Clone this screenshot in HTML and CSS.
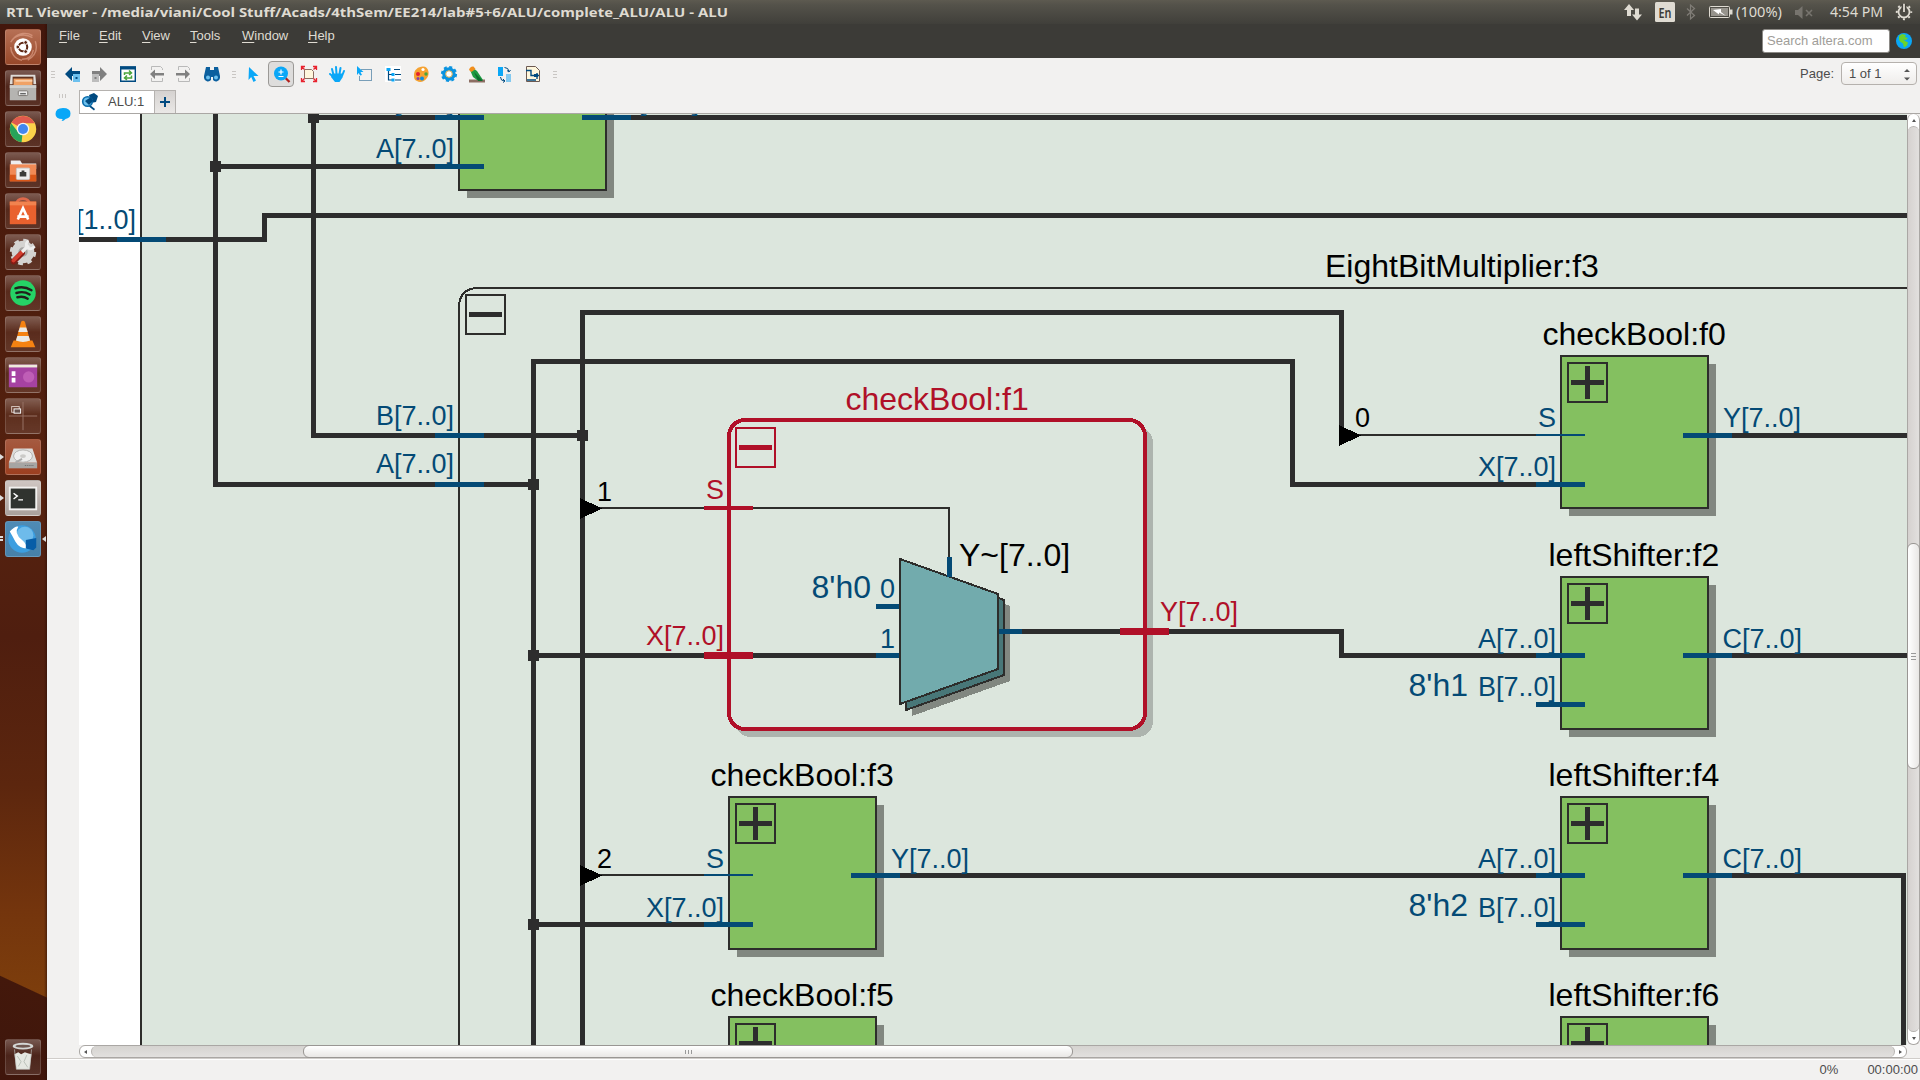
FILE: index.html
```html
<!DOCTYPE html>
<html lang="en">
<head>
<meta charset="utf-8">
<title>RTL Viewer</title>
<link rel="stylesheet" href="styles.css">
</head>
<body>
<div class="desktop">
  <header class="panel">
    <svg class="panel-title" width="730" height="24"><text x="6" y="17" textLength="722" lengthAdjust="spacingAndGlyphs">RTL Viewer - /media/viani/Cool Stuff/Acads/4thSem/EE214/lab#5+6/ALU/complete_ALU/ALU - ALU</text></svg>
    <svg class="indicators" width="300" height="24" viewBox="1620 0 300 24">
      <path fill="#dfdbd2" d="M1629 4l5 6h-3v6h-4v-6h-3zM1637 20.500l-5-6h3v-6h4v6h3z"/>
      <rect x="1655" y="2" width="20" height="20" rx="1.500" fill="#dfdbd2"/>
      <text class="lang" x="1658.500" y="17.500" textLength="13" lengthAdjust="spacingAndGlyphs">En</text>
      <path fill="none" stroke="#807d77" stroke-width="1.200" d="M1687 8.500l7.500 7-4 3.500V5l4 3.500-7.500 7"/>
      <rect x="1709.500" y="6.500" width="20" height="11" rx="1" fill="none" stroke="#dfdbd2"/>
      <rect x="1711" y="8" width="17" height="8" fill="#96938c"/>
      <path fill="#dfdbd2" d="M1730 9.500h2.500v5h-2.500z"/>
      <path fill="#fff" d="M1713 10l8-1v3l5 4-7-3.500v2z"/>
      <text x="1736" y="17" textLength="46" lengthAdjust="spacingAndGlyphs">(100%)</text>
      <path fill="#77746e" d="M1795 10h3l4.500-4v13l-4.500-4h-3z"/>
      <path stroke="#77746e" stroke-width="1.600" d="M1806 10l6 6m0-6l-6 6"/>
      <text x="1830" y="17" textLength="53" lengthAdjust="spacingAndGlyphs">4:54 PM</text>
      <circle cx="1904" cy="12" r="5.500" fill="none" stroke="#dfdbd2" stroke-width="1.800"/>
      <circle cx="1904" cy="12" r="7.200" fill="none" stroke="#dfdbd2" stroke-width="2" stroke-dasharray="2 3.655" stroke-dashoffset="1"/>
      <path stroke="#46443e" stroke-width="5" d="M1904 4v7"/><path stroke="#dfdbd2" stroke-width="1.800" d="M1904 4v8"/>
    </svg>
  </header>

  <div class="workspace">
    <nav class="launcher">
      <div class="tile tile-dash"><svg viewBox="0 0 36 36"><path d="M5 13C9 5 20 3 28 8M31 12c3 9-1 16-8 20M5 18c0 6 4 13 12 14M8 9c5-6 14-7 20-3M29 21c-1 7-6 10-12 10" fill="none" stroke="#e5a991" stroke-width="1.500" opacity=".6"/><circle cx="18" cy="18" r="9.300" fill="#fff"/><circle cx="18" cy="18" r="4.500" fill="none" stroke="#5d2714" stroke-width="2.200"/><g fill="#5d2714" stroke="#fff"><circle cx="12.500" cy="18" r="2"/><circle cx="20.800" cy="13.200" r="2"/><circle cx="20.800" cy="22.800" r="2"/></g></svg></div>
      <div class="tile"><svg viewBox="0 0 36 36"><path fill="#dedcd8" d="M5 4h26l1 10H4z"/><path fill="#62331f" d="M7 6h22v9H7z"/><path fill="#f0a266" d="M8 8h20v7H8z"/><path fill="#fff1df" d="M10 10h18v1H10z"/><path fill="#b5b4b1" d="M4 15h28v16H4z"/><path fill="#d0cfcc" d="M4 15h28v3H4z"/><rect x="13" y="21" width="10" height="5" rx="1" fill="#eee" stroke="#77736d"/><path d="M15 24h6" stroke="#666" stroke-width="1.500"/></svg></div>
      <div class="tile"><svg viewBox="0 0 36 36"><circle cx="18" cy="18" r="14" fill="#fcd24a"/><path fill="#df5a4e" d="M18 18L5.900 11A14 14 0 0 1 30.500 12H18z"/><path fill="#27a35a" d="M18 18l-1.500 14A14 14 0 0 1 5.500 12l7 9z"/><circle cx="18" cy="18" r="6.700" fill="#f4f4f4"/><circle cx="18" cy="18" r="5.300" fill="#4387f0"/></svg></div>
      <div class="tile"><svg viewBox="0 0 36 36"><path fill="#eee" d="M5 8h10l2 3h15v6H5z"/><path fill="#f18a55" d="M4 12h28v18H4z"/><path fill="#d95719" d="M4 23h28v7H4z"/><rect x="11" y="16" width="14" height="12" rx="1" fill="#f0efed" stroke="#c9c6c3"/><path fill="#3c3c38" d="M14.500 20h2v-1.500h3V20h2v5h-7z"/></svg></div>
      <div class="tile"><svg viewBox="0 0 36 36"><path d="M11 11c0-8 14-8 14 0" fill="none" stroke="#de694b" stroke-width="3"/><path fill="#e9612e" d="M4 8h28v24H4z"/><path fill="#f1834f" d="M4 8h28v4H4z"/><path fill="none" stroke="#fff" stroke-width="2.800" d="M12.500 27L18 15l5.500 12M12 24h12"/></svg></div>
      <div class="tile"><svg viewBox="0 0 36 36"><circle cx="18" cy="18" r="12" fill="#d4d3d1"/><circle cx="18" cy="18" r="12.500" fill="none" stroke="#d4d3d1" stroke-width="3" stroke-dasharray="5 4.800"/><circle cx="18" cy="18" r="5" fill="#a5a4a2"/><path stroke="#861b14" stroke-width="6" stroke-linecap="round" d="M8 28l9-9"/><path stroke="#d33c2d" stroke-width="4" stroke-linecap="round" d="M8 27l9-9"/><path stroke="#eee" stroke-width="3.500" d="M17 18l7-7"/><path d="M24 6a4.500 4.500 0 1 0 6 6" fill="none" stroke="#eee" stroke-width="3"/></svg></div>
      <div class="tile"><svg viewBox="0 0 36 36"><circle cx="18" cy="18" r="13.500" fill="#25d366"/><path d="M10 13c6-2 12-1 17 2M11 18c5-1.500 10-1 14 1.500M12 22.500c4-1 8-.500 11 1.500" fill="none" stroke="#231f1c" stroke-width="2.500" stroke-linecap="round"/></svg></div>
      <div class="tile"><svg viewBox="0 0 36 36"><path fill="#f58212" d="M8 25h20l3 7H5z"/><path fill="#f58212" d="M16 5q2-2 4 0l6 22q-8 4-16 0z"/><path fill="#e9e9e6" d="M14.600 11h6.800l1.600 5h-10zM12 20h12l1.500 5q-7.500 3-15 0z"/></svg></div>
      <div class="tile"><svg viewBox="0 0 36 36"><rect x="3" y="7" width="30" height="24" fill="#a642a2"/><circle cx="24" cy="20" r="6" fill="#d779ca" opacity=".5"/><path fill="#eeebdc" d="M3 7h30v3H3z"/><path fill="#fff" d="M6 14h4v5H6zM6 21h4v5H6z"/></svg></div>
      <div class="tile"><svg viewBox="0 0 36 36"><path d="M18 3v30M3 18h30" stroke="#997669"/><rect x="6" y="8" width="8" height="6" fill="none" stroke="#dac9c2"/><rect x="8.500" y="10.500" width="7" height="4.500" fill="#67504b" stroke="#fff"/></svg></div>
      <div class="tile tile-disk"><svg viewBox="0 0 36 36"><path fill="#dddcda" d="M8 9h20l5 15H3z"/><path fill="#a6a5a3" d="M3 24h30v6H3z"/><ellipse cx="18" cy="17" rx="10" ry="6.500" fill="#eee" stroke="#b0afad"/><ellipse cx="18" cy="17" rx="3" ry="2" fill="#cbcac8"/><path d="M10 24l7-4" stroke="#aaa" stroke-width="2"/><path d="M20 27h10" stroke="#666" stroke-dasharray="1 1"/></svg><i class="pip"></i></div>
      <div class="tile tile-term"><svg viewBox="0 0 36 36"><path fill="#f2f1ef" d="M3 6h30v25H3z"/><path fill="#30332f" d="M5 8h26v21H5z"/><path fill="none" stroke="#fff" stroke-width="1.500" d="M8 13l4 3-4 3M13 20h5"/></svg><i class="pip"></i></div>
      <div class="tile tile-quartus"><svg viewBox="0 0 36 36"><circle cx="17" cy="18" r="14.500" fill="#3c9ee0"/><circle cx="20" cy="14" r="9" fill="#83c7f0" opacity=".7"/><path fill="#fff" d="M4 10q6-6 9-5-5 7 4 14 5 4 5 9-8 0-12-7-3-6-6-11z"/><path fill="#075da7" d="M21 19l11-2v10l-3 3-8-2z"/></svg><i class="pip pip-double"></i><i class="pip-right"></i></div>
      <div class="tile tile-trash"><svg viewBox="0 0 36 36"><ellipse cx="18" cy="6.500" rx="11" ry="3.500" fill="#d3d6d4"/><ellipse cx="18" cy="6.500" rx="8" ry="1.600" fill="#6f5851"/><path fill="#e5e8e2" d="M9 15l4-2 3 2 4-2 3 1 4 1-2 16H11z"/><path d="M9 10l2 21h14l2-21" fill="none" stroke="#bfc2bf" opacity=".7"/><path d="M12 17l4 6-3 5M22 16l-3 7 4 6" fill="none" stroke="#b9c0b8"/></svg></div>
    </nav>

    <main class="window">
      <div class="menubar">
        <nav class="menus"><span class="m-file"><u>F</u>ile</span><span class="m-edit"><u>E</u>dit</span><span class="m-view"><u>V</u>iew</span><span class="m-tools"><u>T</u>ools</span><span class="m-window"><u>W</u>indow</span><span><u>H</u>elp</span></nav>
        <div class="search">Search altera.com</div>
        <svg class="globe" width="16" height="16"><circle cx="8" cy="8" r="8" fill="#0aa7f7"/><path fill="#6bd32b" d="M3 3l3-2 4 1-1 2 3 1-2 2-3-.500 3 2 2 1-1 3-3 2-1-4-3-2-1-2z"/></svg>
      </div>

      <div class="toolbar">
        <svg class="tools" width="520" height="32" viewBox="47 58 520 32">
          <g stroke="#c9c6c3" stroke-width="1"><path d="M51 71.500h4M51 74.500h4M51 77.500h4M232 71.500h4M232 74.500h4M232 77.500h4M553 71.500h4M553 74.500h4M553 77.500h4"/></g>
          <path fill="#004a80" d="M65 74l7-7v4h8v5h-8v5z"/><path fill="#6cc0ee" d="M73 74h7v8h-7z"/><path fill="#004a80" d="M75.500 77h2v2h-2z"/>
          <path fill="#808080" d="M107 74l-7-7v4h-8v5h8v5z"/><path fill="#bdbdbd" d="M92 74h7v8h-7z"/><path fill="#808080" d="M94.500 77h2v2h-2z"/>
          <path fill="#fff" stroke="#004a80" stroke-width="1.400" d="M120.700 67h14.600v14.300h-14.600z"/><path fill="#004a80" d="M120 66.500h16v3h-16z"/>
          <path fill="none" stroke="#4aa53c" stroke-width="1.500" d="M124.500 75v-2h6m-1.500-2.500l2.500 2.500-2.500 2M131.500 75.500v2.500h-6m1.500-2.500l-2.500 2.500 2.500 2"/>
          <g fill="none" stroke="#b9b9b9"><path d="M151.500 70v-3.500h9l2 2V70M151.500 78v3.500h11V78M178.500 70v-3.500h9l2 2V70M178.500 78v3.500h11V78"/></g>
          <path fill="#808080" d="M150 74l5-4.500V73h9v2.500h-9V79zM190 74l-5-4.500V73h-9v2.500h9V79z"/>
          <path fill="#0b5f9e" d="M206 67h4v3h4v-3h4l2 9v2a4 4 0 0 1-7 2v-3h-2v3a4 4 0 0 1-7-2v-2z"/><circle cx="208" cy="77.500" r="2" fill="#6cc0ee"/><circle cx="216" cy="77.500" r="2" fill="#6cc0ee"/>
          <path fill="#0aa7f7" d="M249 67l9.500 9h-5l2.500 4.500-2.500 1.500-2.300-5-2.700 3z"/>
          <rect class="pressed" x="268.500" y="61.500" width="25" height="25" rx="3.500"/>
          <path stroke="#b3201c" stroke-width="2.300" d="M284.500 77l5 5"/><circle cx="281" cy="73.500" r="7" fill="#0aa7f7"/><path stroke="#fff" stroke-width="1.200" d="M278.500 72h5M281 69.500v5M278.500 76.500h5"/>
          <path fill="#fff7dd" stroke="#8d6e63" d="M304.500 69.500h7l2 2v7h-9z"/><path fill="none" stroke="#e8222e" stroke-width="1.300" d="M301.500 70v-3.500h3.500M301.500 66.500l3 3M313 66.500h3.500v3.500M316.500 66.500l-3 3M301.500 78v3.500h3.500M301.500 81.500l3-3M313 81.500h3.500v-3.500M316.500 81.500l-3-3"/>
          <g fill="none" stroke="#0aa7f7" stroke-width="2" stroke-linecap="round"><path d="M333.500 75l-1.500-6M336.500 74l-.500-7M339.500 74l1-6M342 76l2-5M333.500 77l-3.500-3"/></g><path fill="#0aa7f7" d="M332.500 73.500h9.500l.5 4-3 4.500h-4.500l-4-5z"/>
          <path fill="none" stroke="#004a80" stroke-dasharray="1 1" d="M361.500 69.500h10v11h-12v-5"/><path fill="#0aa7f7" d="M357 66l6.500 6h-3l1.500 3-2 .500-1.200-2.500-1.800 2z"/>
          <path fill="#fff" d="M385 66h16v16h-16z"/><path fill="none" stroke="#004a80" stroke-width="1.200" d="M388.500 70v10h4M388.500 74.500h4M394 69.500h6M395 74.500h6M395 80h6"/><path fill="#0aa7f7" d="M386.500 68h4v3h-4zM391.500 73h3v3h-3zM391.500 78.500h3v3h-3z"/>
          <path fill="#f5a232" d="M414 75c0-5 4-8.500 9-8.500 6 0 7 8 4 11.500-3 4-7 5-10 3-3-1-3-4-3-6z"/><circle cx="423" cy="69.500" r="1.600" fill="#fff"/><circle cx="418" cy="74" r="2" fill="#e41f2c"/><circle cx="422" cy="78.500" r="2" fill="#0b8fe0"/><circle cx="426" cy="74" r="1.700" fill="#4aa53c"/><circle cx="418" cy="78.500" r="1.500" fill="#8442a8"/>
          <circle cx="449" cy="74" r="5" fill="none" stroke="#0a93e0" stroke-width="3.500"/><circle cx="449" cy="74" r="7" fill="none" stroke="#0a93e0" stroke-width="2.200" stroke-dasharray="3 2.500"/><circle cx="449" cy="74" r="3.300" fill="#fff" stroke="#d4a84e"/>
          <path fill="#8d6e63" d="M469 79.500h16v3h-16z"/><path fill="#1d9a42" d="M470 70l3-2 4 3 6 9h-6l-4-3z"/><path fill="#0b6e2f" d="M474 72l9 9h-5z"/><path fill="#f28e1c" d="M469 70q1-4 4.500-3.500l2 2.500-4 3z"/>
          <path fill="#0aa7f7" d="M498 67h5v9h-5z"/><path fill="#82c9f0" d="M506 74h5v8h-5z"/><path fill="none" stroke="#004a80" d="M504.500 67.500q4 0 4.500 4m-2-1l2 1.500 1.500-2M500.500 77q0 4 4 4m-1.500-2l2 2-2 1.500"/>
          <path fill="#fff7dd" stroke="#6d5a52" d="M526.500 66.500h9l4 4v11h-13z"/><path fill="none" stroke="#004a80" stroke-width="1.400" d="M526 70.500h5v5h8M537 73v6M527 80h9"/><path fill="#004a80" d="M534 74h4v3h-4z"/>
        </svg>
        <div class="pager"><span>Page:</span><div class="combo"><span>1 of 1</span><svg width="8" height="14"><path fill="#555" d="M1 4l3-3 3 3zM1 9.500h6l-3 3z"/></svg></div></div>
      </div>

      <div class="content">
        <aside class="dock"><svg width="32" height="40" viewBox="47 90 32 40"><path stroke="#c9c6c3" d="M59.500 94v4M62.500 94v4M65.500 94v4"/><path fill="#0aa7f7" d="M55.500 114q0-6 7.500-6 7.500 0 7.500 5.500 0 4.500-5 5.500-2 2.500-4 2 1.200-1 1-2-7 0-7-5z"/></svg></aside>
        <section class="viewer">
          <div class="tabs">
            <div class="tab"><svg width="18" height="18"><path fill="#004a80" d="M8 2l5-2 4 3-2 6-5 1zM9 12l5 4-1 1.500-5-4z"/><circle cx="6.500" cy="8.500" r="4.800" fill="#6cc0ee" stroke="#0b6cab" stroke-width="1.600"/><path fill="#004a80" d="M4 8l6-4 2 4-4 4z"/></svg><span>ALU:1</span></div>
            <div class="tab-add"><svg width="10" height="10"><path stroke="#004a80" stroke-width="2" d="M0 5h10M5 0v10"/></svg></div>
          </div>
          <div class="canvas-row">
            <svg class="schematic" width="1828" height="931" viewBox="79 114 1828 931">
              <defs>
                <g id="module">
                  <path class="shadow" d="M9 9h147v152H9z"/>
                  <path class="body" d="M1 1h147v152H1z"/>
                  <path class="frame" d="M8 8h39v39H8z"/>
                  <path class="ink" d="M11 25h33v5H11zM25 11h5v33h-5z"/>
                </g>
                <path id="node" class="ink" d="M0 0h11v11H0z"/>
                <path id="tap" d="M0 0l22 10.500L0 21z"/>
              </defs>
              <rect x="79" y="114" width="62" height="931" fill="#fff"/>
              <rect x="141" y="114" width="1766" height="931" fill="#dce6dd"/>
              <path class="frame" d="M141 110v940"/>
              <path class="frame" d="M459 1050V306q1-17 18-18h1440"/>
              <path class="frame" d="M466 295h39v39h-39z"/><path class="ink" d="M469 312h33v5h-33z"/>

              <rect x="735" y="427" width="418" height="310" rx="16" fill="#adb4ae"/>
              <rect x="729" y="420" width="416" height="309" rx="16" fill="#dce6dd" stroke="#b01028" stroke-width="4"/>
              <path fill="none" stroke="#b01028" stroke-width="2" d="M736 428h39v39h-39z"/><path fill="#b01028" d="M739 445h33v5h-33z"/>

              <use href="#module" x="458" y="37"/>
              <use href="#module" x="1560" y="355"/>
              <use href="#module" x="1560" y="576"/>
              <use href="#module" x="728" y="796"/>
              <use href="#module" x="1560" y="796"/>
              <use href="#module" x="728" y="1016"/>
              <use href="#module" x="1560" y="1016"/>

              <g class="wire">
                <path d="M215.500 110v374.500H534"/>
                <path d="M313.500 117v318.500H583"/>
                <path d="M313 117.500h145M216 166.500h242M607 117.500h1310"/>
                <path d="M70 239.500h194.500v-24H1920"/>
                <path d="M533.500 1050V361.500h759v123H1560"/>
                <path d="M582.500 1050V312.500h759V434"/>
                <path d="M534 655.500h350M534 924.500h194"/>
                <path d="M1010 631.500h331.500v24H1560"/>
                <path d="M1709 435.500h220M1709 655.500h220M877 875.500h683M1709 875.500h194.500V1050"/>
              </g>
              <g class="thin"><path d="M600 508h349v60M1358 435h178M600 875h110"/></g>
              <g class="ink"><use href="#node" x="210" y="161"/><use href="#node" x="308" y="112"/><use href="#node" x="577" y="430"/><use href="#node" x="528" y="479"/><use href="#node" x="528" y="650"/><use href="#node" x="528" y="919"/></g>
              <use href="#tap" x="580" y="498"/><use href="#tap" x="580" y="865"/><use href="#tap" x="1339" y="425"/>

              <g class="pin">
                <path d="M435 117.500h49M435 166.500h49M582 117.500h49M117 239.500h49M435 435.500h49M435 484.500h49"/>
                <path d="M1536 484.500h49M1683 435.500h49M1536 655.500h49M1536 704.500h49M1683 655.500h49M1536 875.500h49M1536 924.500h49M1683 875.500h49M704 924.500h49M851 875.500h49"/>
                <path d="M876 606.500h24M876 655.500h24"/>
              </g>
              <path class="pin-thin" d="M704 875h49M1536 435h49"/>

              <path class="shadow" d="M912 571l98 35v75l-98 35z"/>
              <path class="mux-back" d="M906 565l98 35v75l-98 35z"/>
              <path class="mux" d="M900 559l98 35v75l-98 35z"/>
              <path class="pin" d="M949.500 557v20M999 631.500h23"/>
              <path fill="#b01028" d="M704 506h49v4h-49zM704 652h49v7h-49zM1120 628h49v7h-49z"/>

              <g class="port end">
                <text x="454" y="110">B[7..0]</text><text x="454" y="158">A[7..0]</text><text x="136" y="229">[1..0]</text>
                <text x="454" y="425">B[7..0]</text><text x="454" y="473">A[7..0]</text>
                <text x="724" y="868">S</text><text x="724" y="917">X[7..0]</text>
                <text x="1556" y="427">S</text><text x="1556" y="476">X[7..0]</text>
                <text x="1556" y="648">A[7..0]</text><text x="1556" y="696">B[7..0]</text>
                <text x="1556" y="868">A[7..0]</text><text x="1556" y="917">B[7..0]</text>
                <text x="895" y="598">0</text><text x="895" y="648">1</text>
              </g>
              <g class="port">
                <text x="621" y="110">S[7..0]</text><text x="1723" y="427">Y[7..0]</text><text x="1722.500" y="648">C[7..0]</text><text x="1722.500" y="868">C[7..0]</text><text x="891" y="868">Y[7..0]</text>
              </g>
              <g class="port red"><text class="end" x="724" y="499">S</text><text class="end" x="724" y="645">X[7..0]</text><text x="1160" y="621">Y[7..0]</text></g>
              <g class="port black"><text x="597" y="501">1</text><text x="597" y="868">2</text><text x="1355" y="427">0</text></g>
              <g class="title blue"><text x="811.500" y="598">8'h0</text><text x="1408.500" y="696">8'h1</text><text x="1408.500" y="916">8'h2</text></g>
              <g class="title">
                <text x="1325" y="277">EightBitMultiplier:f3</text><text x="1542.500" y="345">checkBool:f0</text><text x="1548.500" y="566">leftShifter:f2</text><text x="1548.500" y="786">leftShifter:f4</text><text x="1548.500" y="1006">leftShifter:f6</text>
                <text x="710.500" y="786">checkBool:f3</text><text x="710.500" y="1006">checkBool:f5</text><text x="959" y="566">Y~[7..0]</text><text class="red" x="845.500" y="410">checkBool:f1</text>
              </g>
            </svg>
            <div class="vscroll"><b class="up"></b><div class="vtrack"><div class="vthumb"><i></i><i></i><i></i></div></div><b class="down"></b></div>
          </div>
          <div class="hscroll"><b class="left"></b><div class="htrack"><div class="hthumb"><i></i><i></i><i></i></div></div><b class="right"></b></div>
        </section>
      </div>
      <footer class="status"><span>0%</span><span>00:00:00</span></footer>
    </main>
  </div>
</div>
</body>
</html>
```
FILE: styles.css
```css
* { box-sizing: border-box; }
body { margin: 0; overflow: hidden; font: 13px "Liberation Sans", Arial, sans-serif; color: #4c4c4c; }
.desktop { width: 1920px; height: 1080px; display: flex; flex-direction: column; }
svg { display: block; flex: none; }

.panel { height: 24px; display: flex; justify-content: space-between; background: linear-gradient(#5d5a50, #54524a 20%, #403f3a); }
.panel text { font: 14px "Noto Sans", sans-serif; fill: #dfdbd2; }
.panel .panel-title text { font: bold 13px "Open Sans", "Noto Sans", sans-serif; }
.panel .lang { font-weight: 600; fill: #3c3b37; }

.workspace { flex: 1; display: flex; min-height: 0; }
.launcher {
  width: 47px; display: flex; flex-direction: column; gap: 5px; padding: 5px 0 5px 5px;
  background:
    linear-gradient(90deg, transparent 44px, #2a0d0688 47px),
    linear-gradient(205deg, transparent 20px, #43180b 21px, #3f160c) 0 100% / 47px 105px no-repeat,
    linear-gradient(#43170c, #56220f 45%, #4f1e0f 58%, #5c260e 72%, #74350d 84%, #7d3e0c 92%);
}
.tile { position: relative; width: 36px; height: 36px; border-radius: 3px; border: 1px solid #ffffff24; background: linear-gradient(#ffffff48, #ffffff10 45%, #ffffff1c); }
.tile svg { width: 34px; height: 34px; }
.tile-dash { background: linear-gradient(#b67055, #98482a); }
.tile-disk { background: linear-gradient(#a55a40, #9c3f20); }
.tile-term { background: linear-gradient(#cfc6c2, #aaa19c); }
.tile-quartus { background: linear-gradient(#4f8bb5, #4780a8); }
.tile-trash { margin-top: auto; }
.pip { position: absolute; left: -6px; top: 14px; border: solid transparent; border-width: 3px 0 3px 4px; border-left-color: #ddd; }
.pip-double { border: 0; width: 3px; height: 5px; border-top: 2px solid #ddd; border-bottom: 2px solid #ddd; }
.pip-right { position: absolute; right: -6px; top: 14px; border: solid transparent; border-width: 3px 4px 3px 0; border-right-color: #ddd; }

.window { flex: 1; display: flex; flex-direction: column; background: #f2f1f0; min-width: 0; }
.menubar { height: 34px; display: flex; background: #3c3b37; padding: 5px 8px 0 12px; color: #dfdbd2; }
.menus { flex: 1; display: flex; line-height: 13px; }
.menus u { text-decoration: underline; text-underline-offset: 2px; text-decoration-thickness: 1px; }
.m-file { width: 40px; }
.m-edit { width: 43px; }
.m-view { width: 48px; }
.m-tools { width: 52px; }
.m-window { width: 66px; }
.search { width: 128px; height: 24px; border: 1px solid #8c8a86; border-radius: 3px; background: #fff; color: #a09d99; padding-left: 4px; line-height: 22px; }
.globe { margin: 4px 0 0 6px; }

.toolbar { height: 32px; display: flex; justify-content: space-between; }
.pressed { fill: #dedddc; stroke: #9b9996; }
.pager { display: flex; gap: 8px; padding: 4px 3px 0 0; line-height: 23px; }
.pager > span { position: relative; left: 1px; }
.combo { width: 76px; height: 23px; display: flex; justify-content: space-between; align-items: center; padding: 0 5px 0 7px; border: 1px solid #b5b1ad; border-radius: 4px; background: linear-gradient(#fff, #efedeb); line-height: 21px; }
.combo svg { margin-top: 2px; }

.content { flex: 1; display: flex; min-height: 0; }
.dock { width: 32px; }
.viewer { flex: 1; min-width: 0; }
.tabs { height: 24px; display: flex; border-bottom: 1px solid #aaa7a4; }
.tab { width: 76px; display: flex; align-items: center; gap: 9px; padding-left: 1px; background: #fff; border: 1px solid #b5b2af; border-bottom: 0; line-height: 20px; }
.tab span { padding-bottom: 1px; }
.tab-add { width: 21px; display: grid; place-items: center; border: 1px solid #b5b2af; border-left: 0; border-bottom: 0; background: linear-gradient(#d5d2d0, #eae8e6); }
.canvas-row { display: flex; height: 931px; }

.schematic { shape-rendering: crispEdges; font-family: "Liberation Sans", Arial, sans-serif; }
.frame { fill: none; stroke: #2d2d2b; stroke-width: 2; }
.ink { fill: #2d2d2d; }
.body { fill: #84c060; stroke: #2d2d2b; stroke-width: 2; }
.shadow { fill: #818780; }
.wire { fill: none; stroke: #2d2d2d; stroke-width: 5; }
.thin { fill: none; stroke: #2d2d2b; stroke-width: 2; }
.pin { fill: none; stroke: #044a75; stroke-width: 5; }
.pin-thin { fill: none; stroke: #044a75; stroke-width: 2; }
.mux { fill: #72abad; stroke: #2d2d2b; stroke-width: 2; }
.mux-back { fill: #487778; stroke: #2d2d2b; stroke-width: 2; }
.port { font-size: 27px; fill: #044a75; }
.title { font-size: 32px; fill: #000; }
.end { text-anchor: end; }
.blue { fill: #044a75; }
.red { fill: #b01028; }
.black { fill: #000; }

.vscroll { width: 13px; display: flex; flex-direction: column; border: 1px solid #aaa7a4; border-top: 0; border-radius: 6px; background: #fff; }
.vtrack { flex: 1; padding-top: 416px; background: linear-gradient(90deg, #d5d1cf, #e2e0de); border: solid #b5b2af; border-width: 1px 0; border-radius: 6px; }
.vthumb { height: 226px; margin: 0 -1px; border: 1px solid #999693; border-radius: 6px; background: linear-gradient(90deg, #fff, #e9e7e5); display: flex; flex-direction: column; gap: 2px; align-items: center; justify-content: center; }
.vthumb i { width: 5px; height: 1px; background: #999; }
.hscroll { height: 13px; width: 1828px; display: flex; border: 1px solid #aaa7a4; border-radius: 6px; background: #fff; }
.htrack { flex: 1; padding-left: 211px; background: linear-gradient(#d5d3d0, #e2e0de); border: solid #b5b2af; border-width: 0 1px; border-radius: 6px; }
.hthumb { width: 770px; height: 13px; margin-top: -1px; border: 1px solid #999693; border-radius: 6px; background: linear-gradient(#fff, #e9e7e5); display: flex; gap: 2px; align-items: center; justify-content: center; }
.hthumb i { width: 1px; height: 4px; background: #999; }
.vscroll b, .hscroll b { width: 11px; height: 12px; display: grid; place-items: center; }
.vscroll b::after, .hscroll b::after { content: ""; border: 2px solid transparent; }
.vscroll .up::after { border-bottom: 3px solid #555; border-top: 0; }
.vscroll .down::after { border-top: 3px solid #555; border-bottom: 0; }
.hscroll .left::after { border-right: 3px solid #555; border-left: 0; }
.hscroll .right::after { border-left: 3px solid #555; border-right: 0; }

.status { height: 22px; display: flex; justify-content: flex-end; gap: 29px; padding-right: 2px; border-top: 1px solid #d0cdca; box-shadow: inset 0 1px #fff; line-height: 22px; }
```
